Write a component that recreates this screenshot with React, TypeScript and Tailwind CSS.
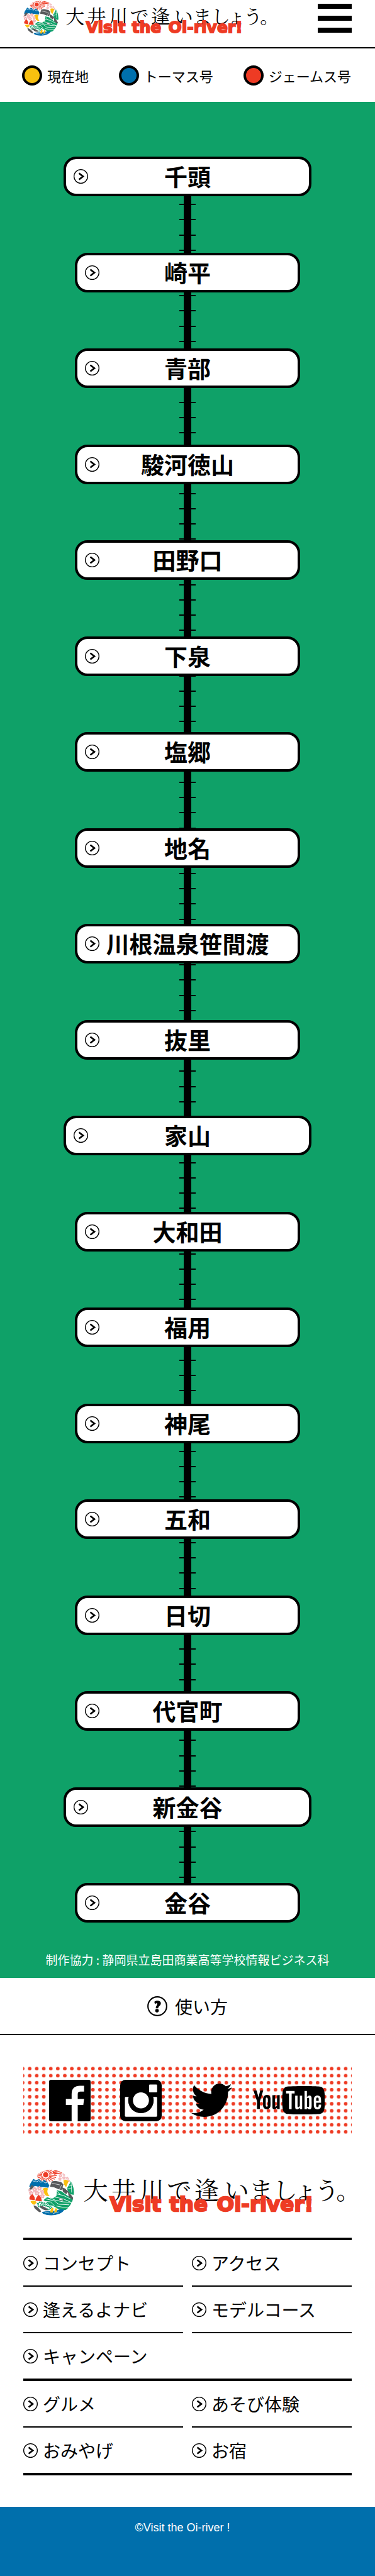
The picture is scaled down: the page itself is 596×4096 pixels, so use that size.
import { FaTwitter } from "react-icons/fa";
import { ImYoutube2 } from "react-icons/im";

const stations = [
  "千頭", "崎平", "青部", "駿河徳山", "田野口", "下泉", "塩郷", "地名", "川根温泉笹間渡", "抜里",
  "家山", "大和田", "福用", "神尾", "五和", "日切", "代官町", "新金谷", "金谷",
];
const terminals = ["千頭", "家山", "新金谷"];

const legend = [
  { label: "現在地", color: "bg-[#f8c00f]" },
  { label: "トーマス号", color: "bg-[#006fac]" },
  { label: "ジェームス号", color: "bg-[#ee3b24]" },
];

const mainMenu = ["コンセプト", "アクセス", "逢えるよナビ", "モデルコース"];
const subMenu = ["グルメ", "あそび体験", "おみやげ", "お宿"];

function Arrow() {
  return (
    <svg viewBox="0 0 24 24" className="size-[23px] shrink-0" aria-hidden="true">
      <circle cx="12" cy="12" r="11.3" fill="#fff" stroke="#000" strokeWidth="1.4" />
      <path d="M8.9 6.8L15.6 12L8.9 17.2" fill="none" stroke="#000" strokeWidth="2.9" />
    </svg>
  );
}

function Flower({ x, y, r }: { x: number; y: number; r: number }) {
  return (
    <g fill="#f2b5b8">
      {[0, 1, 2, 3, 4].map((i) => {
        const a = (i * 2 * Math.PI) / 5 - Math.PI / 2;
        return <circle key={i} cx={x + Math.cos(a) * r * 0.6} cy={y + Math.sin(a) * r * 0.6} r={r * 0.43} />;
      })}
    </g>
  );
}

function Emblem() {
  const rays = Array.from({ length: 24 }, (_, i) => (i * Math.PI) / 12 + 0.1);
  return (
    <g clipPath="url(#emblem-disc)">
      <g stroke="#ee3b24" strokeWidth="1.3">
        {rays.map((a) => {
          const out = Math.cos(a) > 0.3 ? 19 : 15;
          return (
            <line
              key={a}
              x1={29.7 + Math.cos(a) * 6.2}
              y1={8.7 + Math.sin(a) * 6.2}
              x2={29.7 + Math.cos(a) * out}
              y2={8.7 + Math.sin(a) * (Math.sin(a) > 0 ? 13 : out)}
            />
          );
        })}
      </g>
      <path d="M42 5L57 2.5M44 7.5L58 5M46 2.5L53 .5" stroke="#ee3b24" strokeWidth="1.6" />
      <circle cx="29.7" cy="8.7" r="4.6" fill="#ee3b24" />
      <Flower x={55} y={10} r={3} />
      <Flower x={61} y={8} r={2.6} />
      <Flower x={54} y={16} r={3} />
      <Flower x={61} y={14} r={3} />
      <Flower x={67} y={14.5} r={2.6} />
      <Flower x={69} y={19} r={2.2} />
      <path d="M1 29C3 23 6 20 8.500 15.500L13 18L18 16L23 20L28 17.500L33 22L36 27L34 31C27 29 20 31 13 28L6 29Z" fill="#006fac" />
      <path d="M7 18L9.500 20L12 19L14 21L18 18.500L21 21.500L25 20L29 22.500L32 22" fill="none" stroke="#fff" strokeWidth=".9" />
      <path d="M0 35L6 26L10 29L4 35Z" fill="#58595b" />
      <path d="M37 29L40 20L46 19L56 21L60 25L57 35L51 33L44 30Z" fill="#58595b" />
      <path d="M40 23L54 26M57 26L53 34" stroke="#fff" strokeWidth=".8" fill="none" />
      <path d="M60 18L64 17L69 19L67 24L64.500 30L61 25Z" fill="#fbbf10" />
      <path d="M66 32L71 23L73 18L79 30L78 43L72 42L68 37Z" fill="#0fa168" />
      <path d="M73 20L74 39M66 33L75 31M69 28L77 26" stroke="#fff" strokeWidth=".8" />
      <path d="M58 31L63 32L67 38L65 42L59 37ZM68 40L73 43L77 49L76 53L69 47Z" fill="#58595b" />
      <path d="M58 31L67 37L76 49" fill="none" stroke="#58595b" strokeWidth="2" />
      <Flower x={11} y={34} r={4.2} />
      <Flower x={19} y={32} r={4} />
      <Flower x={5} y={40} r={4} />
      <Flower x={15} y={40} r={4.2} />
      <Flower x={24} y={38} r={3.6} />
      <Flower x={24} y={45} r={4} />
      <Flower x={2} y={35} r={2.4} />
      <path d="M24 33C28 30 31 31 34 32C31 37 33 42 37 45C30 46 26 42 27 36Z" fill="#fbbf10" />
      <path d="M2 51C1 46 5 43 7 42C10 45 12 48 11 52ZM12 53C13 48 16 44 18 43C21 46 23 49 23 54Z" fill="#ee3b24" />
      <path d="M4 54C7 52 14 53 14 56C14 59 11 57 11 60L7 59C7 57 4 57 4 54Z" fill="#fbbf10" />
      <path d="M49 35L57 37L69 46L78 53L75 62L68 68L56 70L44 63L34 58L26 52L32 47L42 49L48 45Z" fill="#0fa168" />
      <path d="M47 41L60 44L72 50M46 47L60 50L76 57M30 50L44 53L52 59L70 60M34 47L46 52L60 55L75 56M48 62L58 64L72 64M28 54L38 55L45 62M50 37L54 42" fill="none" stroke="#fff" strokeWidth="1" />
      <path d="M52 49L60 51L59 53L53 52Z" fill="#fff" stroke="#222" strokeWidth=".6" />
      <path d="M16 58L20 55L37 60L40 64L35 68L18 63Z" fill="none" stroke="#0fa168" strokeWidth="2.300" strokeDasharray="2 1" />
      <path d="M20 60L36 63M22 57L38 65" fill="none" stroke="#0fa168" strokeWidth="2" strokeDasharray="2 1" />
      <path d="M9 61C13 61 18 65 22 71L20 73C14 71 10 67 9 61ZM19 62C24 61 31 65 34 69C28 70 23 68 19 62Z" fill="#58595b" />
      <path d="M23 73C30 69 41 72 50 69C56 67 60 68 61 69C58 74 50 78 39 79C32 78 26 77 23 73Z" fill="#006fac" />
      <path d="M28 73L36 74M42 75L52 72" stroke="#fff" strokeWidth=".7" />
      <path d="M37 73L39 66L43 65L42 73ZM44 73L46 66L49 66L49 72Z" fill="#fbbf10" />
      <circle cx="40.500" cy="39" r="7" fill="#fff" />
    </g>
  );
}

function Logo({ className }: { className: string }) {
  return (
    <svg viewBox="0 0 545 80" className={`overflow-visible ${className}`} role="img" aria-label="大井川で逢いましょう。 Visit the Oi-river!">
      <defs>
        <clipPath id="emblem-disc">
          <circle cx="39" cy="39" r="39" />
        </clipPath>
      </defs>
      <Emblem />
      <text
        x="94 142 190 237 284 335 377 418 452 489 526"
        y="51"
        fontSize="42"
        className="font-['Noto_Serif_CJK_JP','Noto_Sans_CJK_JP',serif] font-normal"
      >
        大井川で逢いましょう。
      </text>
      <g fill="#ee3b24" stroke="#ee3b24" strokeWidth="2.5" fontSize="35" className="font-['DejaVu_Sans',sans-serif] font-bold">
        <text x="139" y="71">Visit</text>
        <text x="241" y="71">the</text>
        <text x="322" y="71">Oi-river!</text>
      </g>
    </svg>
  );
}

function Track() {
  const ticks = Array.from({ length: 112 }, (_, i) => Math.round(26 + i * 24.18));
  return (
    <svg className="absolute inset-y-0 left-1/2 h-full w-[26px] -translate-x-1/2" aria-hidden="true">
      <rect x="7" y="32" width="12" height="2740" />
      {ticks.map((y) => (
        <rect key={y} x="0" y={y + 25} width="26" height="2" />
      ))}
    </svg>
  );
}

function MenuLink({ label }: { label: string }) {
  return (
    <a href="#" className="flex h-[72px] items-center gap-2 text-[28px] leading-none">
      <Arrow />
      {label}
    </a>
  );
}

export default function App() {
  return (
    <div className="bg-white font-['Noto_Sans_CJK_JP',sans-serif] text-black">
      <header className="flex h-[77px] items-start justify-between border-b-2 border-black px-[37px]">
        <a href="#">
          <Logo className="mt-px w-[390px]" />
        </a>
        <button type="button" aria-label="メニュー" className="mt-[6px] flex w-[54px] flex-col gap-[11px]">
          <span className="h-2 bg-black" />
          <span className="h-2 bg-black" />
          <span className="h-2 bg-black" />
        </button>
      </header>

      <ul className="flex h-[85px] items-center justify-between pr-[38px] pl-[35px]">
        {legend.map((item) => (
          <li key={item.label} className="flex items-center gap-2 text-[22px] leading-8">
            <span className={`size-8 rounded-full border-4 border-black ${item.color}`} />
            {item.label}
          </li>
        ))}
      </ul>

      <main className="bg-[#0fa168] pt-[87px] pb-[15px]">
        <div className="relative">
          <Track />
          <ol className="relative flex flex-col items-center">
            {stations.map((name) => (
              <li
                key={name}
                className={`not-last:even:pb-[89px] not-last:odd:pb-[90px] ${terminals.includes(name) ? "w-[394px]" : "w-[358px]"}`}
              >
                <a
                  href="#"
                  className="grid h-[63px] grid-cols-[23px_1fr_23px] items-center rounded-[20px] border-4 border-black bg-white px-3 text-center text-[37px] leading-none font-bold whitespace-nowrap"
                >
                  <Arrow />
                  <span>{name}</span>
                </a>
              </li>
            ))}
          </ol>
        </div>
        <p className="mt-[45px] text-center text-[19px] leading-7 text-white">
          制作協力 : 静岡県立島田商業高等学校情報ビジネス科
        </p>
      </main>

      <a href="#" className="flex h-[91px] items-center justify-center gap-3 border-b-2 border-black text-[28px] leading-none">
        <svg viewBox="0 0 34 34" className="size-8" aria-hidden="true">
          <circle cx="17" cy="17" r="15.800" fill="none" stroke="#000" strokeWidth="2.200" />
          <path d="M12 9.500C14 7 23 6.500 23 12C23 16.500 18.500 16.500 18.500 20.500H14.500C14.500 16.500 17 15.500 17 12.800C17 11 14 12 13 13.500Z" />
          <circle cx="16.500" cy="24.500" r="3" />
        </svg>
        使い方
      </a>

      <footer>
        <div className="px-[37px] pt-[50px]">
          <div className="relative h-[107px]">
            <svg className="absolute inset-0 size-full" aria-hidden="true">
              <defs>
                <pattern id="dots" width="12" height="12" patternUnits="userSpaceOnUse" patternTransform="scale(.93) translate(5 -2.500)">
                  <circle cx="6" cy="6" r="3.100" fill="#ee3b24" />
                </pattern>
              </defs>
              <rect width="100%" height="100%" fill="url(#dots)" />
            </svg>
            <div className="relative flex h-full items-center justify-between pr-[43px] pl-[41px]">
              <div className="flex items-center gap-[47px]">
                <a href="#" aria-label="Facebook">
                  <svg viewBox="0 0 70 70" className="size-[66px]">
                    <rect width="70" height="70" rx="3.500" />
                    <path fill="#fff" d="M38 70V42.500H28.300V32.300H38V24C38 14 44 10.200 52 10.200H59V20H53C49.500 20 48.300 21.500 48.300 24.500V32.300H59L57.700 42.500H48.300V70Z" />
                  </svg>
                </a>
                <a href="#" aria-label="Instagram">
                  <svg viewBox="0 0 70 70" className="size-[66px]">
                    <rect width="70" height="70" rx="9" />
                    <rect x="8" y="29" width="54.300" height="33.300" rx="1.500" fill="#fff" />
                    <circle cx="35" cy="34.800" r="21.500" />
                    <circle cx="35" cy="34.800" r="13.500" fill="#fff" />
                    <rect x="48.700" y="8" width="13.600" height="13.300" rx="1.500" fill="#fff" />
                  </svg>
                </a>
                <a href="#" aria-label="Twitter">
                  <FaTwitter className="size-[65px]" />
                </a>
              </div>
              <a href="#" aria-label="YouTube" className="grid items-center">
                <span className="col-start-1 row-start-1 h-9 w-[58px] justify-self-end border-r-4 border-transparent bg-white bg-clip-padding" />
                <ImYoutube2 className="relative col-start-1 row-start-1 size-[113px]" />
              </a>
            </div>
          </div>
          <a href="#" className="mt-[57px] flex justify-center">
            <Logo className="w-[507px]" />
          </a>
          <nav className="mt-[34px]">
            <ul className="grid grid-cols-2 gap-x-[14px] border-t-4 border-black">
              {mainMenu.map((label) => (
                <li key={label} className="border-b-2 border-black">
                  <MenuLink label={label} />
                </li>
              ))}
              <li className="col-span-2">
                <MenuLink label="キャンペーン" />
              </li>
            </ul>
            <ul className="grid grid-cols-2 gap-x-[14px] border-y-4 border-black">
              {subMenu.map((label, i) => (
                <li key={label} className={i < 2 ? "border-b-2 border-black" : ""}>
                  <MenuLink label={label} />
                </li>
              ))}
            </ul>
          </nav>
        </div>
        <p className="mt-[50px] h-[112px] bg-[#006fac] pt-[21px] pr-4 text-center font-['Liberation_Sans',sans-serif] text-[18px] leading-6 text-white">
          ©Visit the Oi-river !
        </p>
      </footer>
    </div>
  );
}
